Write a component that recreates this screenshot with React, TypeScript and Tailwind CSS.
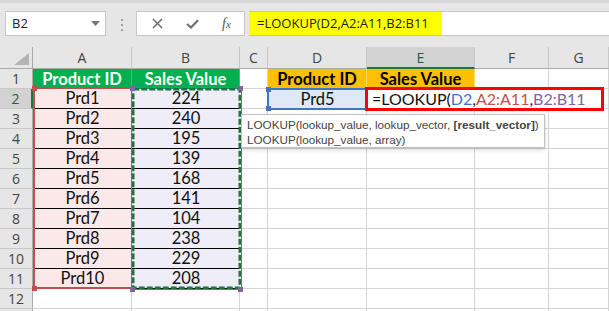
import React from 'react';

const COLS = ['A', 'B', 'C', 'D', 'E', 'F', 'G'];

const products = ['Prd1', 'Prd2', 'Prd3', 'Prd4', 'Prd5', 'Prd6', 'Prd7', 'Prd8', 'Prd9', 'Prd10'];
const sales = [224, 240, 195, 139, 168, 141, 104, 238, 229, 208];

const uiFont = { fontFamily: '"Open Sans", "Noto Sans", sans-serif' };
const cellFont = { fontFamily: 'Lato, "Noto Sans", sans-serif' };
const tipFont = { fontFamily: '"Liberation Sans", Arial, sans-serif' };

function Toolbar() {
  return (
    <div className="h-[47px] bg-[#e6e6e6] border-t-[3px] border-[#d8d8d8] flex items-start pt-[8px]" style={uiFont}>
      {/* Name box */}
      <div className="ml-[5px] w-[101px] h-[25px] bg-white border border-[#c6c6c6] flex items-center justify-between pl-[6px] pr-[5px] text-[13px] text-[#222]">
        <span>B2</span>
        <svg width="9" height="5" viewBox="0 0 9 5">
          <path d="M0 0 L9 0 L4.5 5 Z" fill="#777" />
        </svg>
      </div>

      {/* grip dots */}
      <div className="ml-[15px] mt-[8px] flex flex-col gap-[3px]">
        <div className="w-[2px] h-[2px] bg-[#a0a0a0]" />
        <div className="w-[2px] h-[2px] bg-[#a0a0a0]" />
        <div className="w-[2px] h-[2px] bg-[#a0a0a0]" />
      </div>

      {/* cancel / enter / fx */}
      <div className="ml-[13px] w-[109px] h-[25px] bg-white border border-[#c6c6c6] flex items-center">
        <svg className="ml-[15px]" width="11" height="11" viewBox="0 0 11 11">
          <path d="M1 1 L10 10 M10 1 L1 10" stroke="#6e6e6e" strokeWidth="1.6" />
        </svg>
        <svg className="ml-[23px]" width="13" height="10" viewBox="0 0 13 10">
          <path d="M1 5 L5 8.5 L12 1.2" stroke="#6e6e6e" strokeWidth="2.2" fill="none" />
        </svg>
        <span
          className="ml-[23px] text-[14px] italic text-[#555] leading-none"
          style={{ fontFamily: '"Liberation Serif", serif' }}
        >
          f<span className="text-[11px]">x</span>
        </span>
      </div>

      {/* formula input */}
      <div className="ml-[4px] flex-1 h-[25px] bg-white border-y border-[#c6c6c6]">
        <div className="w-[193px] h-full bg-[#ffff00] flex items-center pl-[8px] text-[13px] text-[#222]">
          =LOOKUP(D2,A2:A11,B2:B11
        </div>
      </div>
    </div>
  );
}

function ColHeader({ label }: { label: string }) {
  const selected = label === 'E';
  return (
    <div
      className={
        'flex items-center justify-center text-[14px] border-r border-[#c8c8c8] ' +
        (selected
          ? 'bg-[#d2d2d2] text-[#1f5f3a] border-b-2 border-b-[#217346]'
          : 'bg-[#e6e6e6] text-[#444] border-b border-b-[#ababab]')
      }
      style={uiFont}
    >
      {label}
    </div>
  );
}

function RowHeader({ n }: { n: number }) {
  const selected = n === 2;
  return (
    <div
      className={
        'flex items-center justify-center text-[14px] border-b border-[#c8c8c8] ' +
        (selected
          ? 'bg-[#d2d2d2] text-[#1f5f3a] border-r-2 border-r-[#217346]'
          : 'bg-[#e6e6e6] text-[#444] border-r border-r-[#ababab]')
      }
      style={uiFont}
    >
      {n <= 12 ? n : null}
    </div>
  );
}

function Cell({ row, col }: { row: number; col: string }) {
  let cls = 'border-r border-b border-[#d4d4d4] bg-white';
  let text: React.ReactNode = null;

  if (row === 1 && (col === 'A' || col === 'B')) {
    cls = 'bg-[#00b050] text-white font-bold border-r border-[#3fc47a]';
    text = col === 'A' ? 'Product ID' : 'Sales Value';
  } else if (row === 1 && (col === 'D' || col === 'E')) {
    cls = 'bg-[#ffc000] text-black font-bold border-r border-[#ffd966]';
    text = col === 'D' ? 'Product ID' : 'Sales Value';
  } else if (row >= 2 && row <= 11 && col === 'A') {
    cls = 'bg-[#fbe9e9] border-b border-black';
    text = products[row - 2];
  } else if (row >= 2 && row <= 11 && col === 'B') {
    cls = 'bg-[#efedf8] border-b border-black';
    text = sales[row - 2];
  } else if (row === 2 && col === 'D') {
    cls = 'bg-[#dfe8f5]';
    text = 'Prd5';
  }

  return (
    <div className={'flex items-center justify-center text-[16.5px] text-[#111] ' + cls} style={cellFont}>
      {text}
    </div>
  );
}

function Corner({ x, y, color }: { x: number; y: number; color: string }) {
  return (
    <div
      className="absolute w-[5px] h-[5px]"
      style={{ left: x - 2, top: y - 2, backgroundColor: color }}
    />
  );
}

function Sheet() {
  const rows = Array.from({ length: 13 }, (_, i) => i + 1);
  return (
    <div className="relative grid grid-cols-[33px_99px_108px_28px_99px_108px_74px_60px] grid-rows-[22px_repeat(13,20px)]">
      {/* select-all corner */}
      <div className="bg-[#e6e6e6] border-r border-b border-[#ababab] flex items-end justify-end pr-[3px] pb-[3px]">
        <svg width="15" height="12" viewBox="0 0 15 12">
          <path d="M15 0 L15 12 L0 12 Z" fill="#b4b4b4" />
        </svg>
      </div>
      {COLS.map((c) => (
        <ColHeader key={c} label={c} />
      ))}

      {rows.map((r) => (
        <React.Fragment key={r}>
          <RowHeader n={r} />
          {COLS.map((c) => (
            <Cell key={c} row={r} col={c} />
          ))}
        </React.Fragment>
      ))}

      {/* A2:A11 reference (red) */}
      <div className="absolute left-[33px] top-[40px] w-[99px] h-[202px] border-2 border-[#c0504d] border-r-0" />
      <Corner x={34} y={41} color="#c0504d" />
      <Corner x={34} y={241} color="#c0504d" />

      {/* B2:B11 reference (purple) with copy marquee */}
      <svg className="absolute left-[130px] top-[39px]" width="113" height="205" viewBox="0 0 113 205">
        <rect x="1.5" y="1.5" width="110" height="202" fill="none" stroke="#8064a2" strokeWidth="1" />
        <rect x="3.25" y="3.25" width="106.5" height="198.5" fill="none" stroke="#217346" strokeWidth="2.5" strokeDasharray="6 2" />
      </svg>
      <Corner x={132} y={41} color="#8064a2" />
      <Corner x={240} y={41} color="#8064a2" />
      <Corner x={132} y={242} color="#8064a2" />
      <Corner x={240} y={242} color="#8064a2" />

      {/* D2 reference (blue) */}
      <div className="absolute left-[267px] top-[41px] w-[101px] h-[22px] border-2 border-[#4472c4]" />
      <Corner x={268} y={42} color="#4472c4" />
      <Corner x={268} y={61} color="#4472c4" />

      {/* E2 in edit mode */}
      <div
        className="absolute left-[365px] top-[40px] w-[239px] h-[24px] border-[3px] border-[#ff0000] bg-white flex items-center pl-[4px] text-[16px] text-[#111] whitespace-nowrap"
        style={cellFont}
      >
        =LOOKUP(<span className="text-[#4472c4]">D2</span>,<span className="text-[#c0504d]">A2:A11</span>,
        <span className="text-[#8064a2]">B2:B11</span>
      </div>

      {/* function tooltip */}
      <div
        className="absolute left-[241px] top-[67px] w-[304px] h-[34px] bg-white border border-[#c0c0c0] shadow-[0_2px_4px_rgba(0,0,0,0.15)] px-[5px] pt-[2px] text-[11.7px] leading-[15px] text-[#444] whitespace-nowrap"
        style={tipFont}
      >
        <div>
          LOOKUP(lookup_value, lookup_vector, <span className="font-bold">[result_vector]</span>)
        </div>
        <div>LOOKUP(lookup_value, array)</div>
      </div>
    </div>
  );
}

export default function App() {
  return (
    <div className="w-[609px] h-[311px] overflow-hidden bg-white">
      <Toolbar />
      <Sheet />
    </div>
  );
}
